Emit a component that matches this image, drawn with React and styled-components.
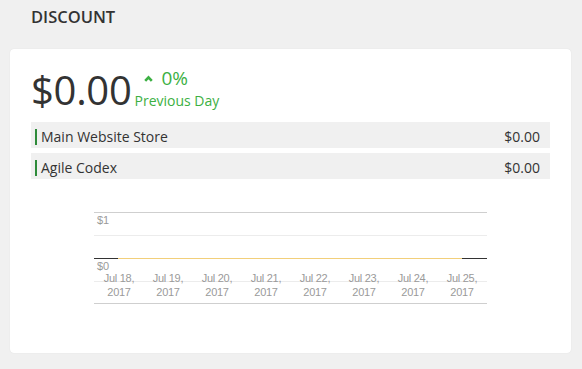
import React from "react";
import styled, { createGlobalStyle } from "styled-components";

const GlobalStyle = createGlobalStyle`
  html, body { margin: 0; padding: 0; background: #f0f0f0; }
  body { font-family: "Open Sans", "Liberation Sans", sans-serif; color: #333; }
`;

const GREEN = "#3cb043";

const Page = styled.div`
  width: 582px;
  height: 369px;
  box-sizing: border-box;
  padding: 7px 11px 0 10px;
  background: #f0f0f0;
`;

const Title = styled.h2`
  margin: 0;
  padding-left: 21px;
  height: 42px;
  font-size: 16.5px;
  line-height: 20px;
  font-weight: 600;
  color: #333;
`;

const Card = styled.div`
  background: #fff;
  border-radius: 4px;
  box-shadow: 0 0 1px rgba(0, 0, 0, 0.12);
  padding: 20px 21px 47px 21px;
`;

const Summary = styled.div`
  display: flex;
  align-items: flex-start;
`;

const BigValue = styled.div`
  font-size: 40px;
  line-height: 42px;
  font-weight: 400;
  color: #333;
  letter-spacing: -0.3px;
`;

const Change = styled.div`
  display: flex;
  flex-direction: column;
  margin-left: 3px;
  color: ${GREEN};
`;

const Percent = styled.div`
  display: flex;
  align-items: center;
  padding-left: 9px;
  font-size: 19px;
  line-height: 18px;
  gap: 9px;
`;

const Caption = styled.div`
  margin-top: 5px;
  font-size: 14px;
  line-height: 18px;
`;

const Rows = styled.div`
  display: flex;
  flex-direction: column;
  gap: 5px;
  margin-top: 11px;
`;

const Row = styled.div`
  display: flex;
  align-items: center;
  justify-content: space-between;
  box-sizing: border-box;
  height: 26px;
  padding: 4px 10px 0 4px;
  background: #f0f0f0;
  font-size: 14px;
  color: #333;
`;

const Label = styled.span`
  display: inline-block;
  border-left: 2px solid #2e8b3a;
  padding-left: 4px;
  line-height: 16px;
`;

const Amount = styled.span`
  line-height: 16px;
`;

const ChartWrap = styled.div`
  display: flex;
  justify-content: center;
  margin-top: 33px;
`;

const dates = ["Jul 18,", "Jul 19,", "Jul 20,", "Jul 21,", "Jul 22,", "Jul 23,", "Jul 24,", "Jul 25,"];

function Chart() {
  const W = 393;
  const axisFont = { fontFamily: '"Liberation Sans", Arial, sans-serif', fontSize: 11, fill: "#9a9a9a" };
  return (
    <svg width={W} height={94} viewBox={`0 0 ${W} 94`}>
      <line x1="0" x2={W} y1="0.5" y2="0.5" stroke="#cfcfcf" />
      <text x="3" y="12" style={axisFont} fontSize="10.5">$1</text>
      <line x1="0" x2={W} y1="23.5" y2="23.5" stroke="#ececec" />
      <line x1="0" x2={W} y1="46.5" y2="46.5" stroke="#333" />
      <line x1="24" x2="368" y1="46.5" y2="46.5" stroke="#f2cf7a" />
      <text x="3" y="58" style={axisFont} fontSize="10.5">$0</text>
      <line x1="0" x2={W} y1="69.5" y2="69.5" stroke="#ececec" />
      {dates.map((d, i) => (
        <g key={d}>
          <text x={25 + 49 * i} y="70" textAnchor="middle" style={axisFont} letterSpacing="-0.3">{d}</text>
          <text x={25 + 49 * i} y="84" textAnchor="middle" style={axisFont} letterSpacing="-0.3">2017</text>
        </g>
      ))}
      <line x1="0" x2={W} y1="91.5" y2="91.5" stroke="#cfcfcf" />
    </svg>
  );
}

function Caret() {
  return (
    <svg width="9" height="7" viewBox="0 0 9 7">
      <polyline points="1.2,5.8 4.5,2.3 7.8,5.8" fill="none" stroke={GREEN} strokeWidth="2.6" strokeLinecap="butt" strokeLinejoin="miter" />
    </svg>
  );
}

export default function App() {
  return (
    <>
      <GlobalStyle />
      <Page>
        <Title>DISCOUNT</Title>
        <Card>
          <Summary>
            <BigValue>$0.00</BigValue>
            <Change>
              <Percent>
                <Caret />
                <span>0%</span>
              </Percent>
              <Caption>Previous Day</Caption>
            </Change>
          </Summary>
          <Rows>
            <Row>
              <Label>Main Website Store</Label>
              <Amount>$0.00</Amount>
            </Row>
            <Row>
              <Label>Agile Codex</Label>
              <Amount>$0.00</Amount>
            </Row>
          </Rows>
          <ChartWrap>
            <Chart />
          </ChartWrap>
        </Card>
      </Page>
    </>
  );
}
